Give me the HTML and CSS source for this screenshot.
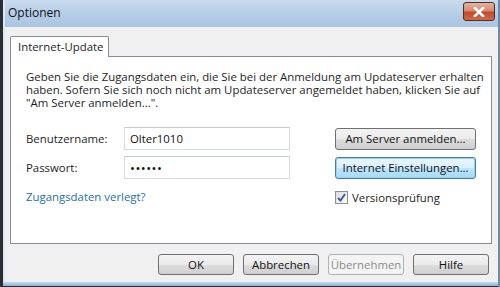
FILE: index.html
```html
<!DOCTYPE html>
<html lang="de">
  <head>
    <meta charset="UTF-8" />
    <title>Optionen</title>
    <link rel="stylesheet" href="styles.css">
  </head>
  <body>
    <div class="window">
      <div class="titlebar">
        <span class="title">Optionen</span>
        <button class="close" title="Schließen">
          <svg width="12" height="10" viewBox="0 0 12 10">
            <path d="M2 1 L10 9 M10 1 L2 9" stroke="#fff" stroke-width="2.6" stroke-linecap="square" />
          </svg>
        </button>
      </div>
      <div class="client">
        <div class="tabs">
          <div class="tab active">Internet-Update</div>
        </div>
        <div class="panel">
          <p class="intro">
            Geben Sie die Zugangsdaten ein, die Sie bei der Anmeldung am Updateserver erhalten<br />
            haben. Sofern Sie sich noch nicht am Updateserver angemeldet haben, klicken Sie auf<br />
            "Am Server anmelden...".
          </p>
          <div class="form">
            <label for="user">Benutzername:</label>
            <input id="user" class="textbox" type="text" value="Olter1010" />
            <button class="btn side">Am Server anmelden...</button>

            <label for="pass">Passwort:</label>
            <input id="pass" class="textbox" type="password" value="secret" />
            <button class="btn side default">Internet Einstellungen...</button>

            <a class="link" href="#">Zugangsdaten verlegt?</a>
            <label class="check">
              <span class="checkbox">
                <svg width="9" height="9" viewBox="0 0 9 9">
                  <path d="M1 5 L3.5 7.5 L8 1" fill="none" stroke="#3a5796" stroke-width="1.8" />
                </svg>
              </span>
              Versionsprüfung
            </label>
          </div>
        </div>
        <div class="footer">
          <button class="btn wide">OK</button>
          <button class="btn wide">Abbrechen</button>
          <button class="btn wide" disabled>Übernehmen</button>
          <button class="btn wide">Hilfe</button>
        </div>
      </div>
      <div class="bottom-frame"></div>
    </div>
  </body>
</html>
```

FILE: styles.css
```css
body {
  margin: 0;
  font-family: "Open Sans", "Noto Sans", sans-serif;
  font-size: 11.4px;
  color: #1e1e1e;
}

.window {
  width: 500px;
  height: 287px;
  box-sizing: border-box;
  display: flex;
  flex-direction: column;
  background: #f0f0f0;
  border-left: 3px solid #2a2e33;
  border-right: 2px solid #6f8aa8;
}

.titlebar {
  height: 27px;
  flex: none;
  display: flex;
  align-items: center;
  justify-content: space-between;
  padding: 0 3px 0 3px;
  background: linear-gradient(#c9dbee, #b3cbe6 60%, #aac4e1);
  border-left: 2px solid #dbe7f4;
}

.title {
  font-size: 12px;
  color: #111;
  margin-top: -2px;
}

.close {
  width: 32px;
  height: 19px;
  padding: 0;
  margin-top: -4px;
  border: 1px solid #4b3029;
  border-radius: 3px;
  background: linear-gradient(#e7b2a0, #d78a70 45%, #c24a2b 55%, #d16a48);
  display: flex;
  align-items: center;
  justify-content: center;
}

.client {
  flex: 1;
  display: flex;
  flex-direction: column;
  padding: 9px 6px 0 5px;
  border-left: 2px solid #dbe7f4;
}

.tabs {
  display: flex;
  height: 21px;
  position: relative;
  z-index: 1;
}

.tab {
  width: 99px;
  box-sizing: border-box;
  padding: 0 0 0 7px;
  white-space: nowrap;
  line-height: 20px;
  background: #fff;
  border: 1px solid #898c95;
  border-bottom: none;
  border-radius: 2px 2px 0 0;
}

.panel {
  height: 188px;
  box-sizing: border-box;
  margin-top: -1px;
  background: #fff;
  border: 1px solid #898c95;
  padding: 13px 15px 0 15px;
}

.intro {
  margin: 0;
  line-height: 13px;
  white-space: nowrap;
}

.form {
  display: grid;
  grid-template-columns: 98px 166px 1fr;
  grid-template-rows: 23px 23px 24px;
  row-gap: 6px;
  align-items: center;
  margin-top: 18px;
}

.textbox {
  height: 23px;
  box-sizing: border-box;
  margin: 0;
  padding: 0 5px;
  border: 1px solid #d8dde3;
  border-top-color: #c6cbd1;
  font: inherit;
  color: #111;
}

.textbox[type="password"] {
  font-size: 13px;
  letter-spacing: 0.5px;
}

.btn {
  height: 22px;
  padding: 0;
  border: 1px solid #707070;
  border-radius: 3px;
  background: linear-gradient(#f3f3f3, #ebebeb 50%, #dddddd 50%, #cfcfcf);
  font: inherit;
  color: #111;
  white-space: nowrap;
}

.btn.side {
  width: 141px;
  justify-self: end;
}

.btn.default {
  border-color: #3c7fb1;
  background: linear-gradient(#eaf6fd, #d9f0fc 50%, #bee6fd 50%, #a7d9f5);
  box-shadow: inset 0 0 0 1px #9ad0ee;
}

.btn:disabled {
  border-color: #adb2b5;
  background: #f4f4f4;
  color: #8b8b8b;
}

.link {
  color: #1f6ea6;
  text-decoration: none;
  grid-column: 1 / 3;
  align-self: start;
  margin-top: 4px;
}

.check {
  display: flex;
  align-items: center;
  gap: 4px;
  align-self: start;
  margin: 5px 0 0 45px;
}

.checkbox {
  width: 11px;
  height: 11px;
  border: 1px solid #8e8f8f;
  background: linear-gradient(135deg, #dcdcdc, #fbfbfb);
  display: flex;
  align-items: center;
  justify-content: center;
}

.footer {
  display: flex;
  justify-content: flex-end;
  gap: 9px;
  padding: 10px 3px 0 0;
}

.btn.wide {
  width: 76px;
  height: 21px;
}

.bottom-frame {
  height: 5px;
  margin-top: auto;
  background: linear-gradient(#c5dcef, #8fb6d8 70%, #2a2e33 70%);
}
```
